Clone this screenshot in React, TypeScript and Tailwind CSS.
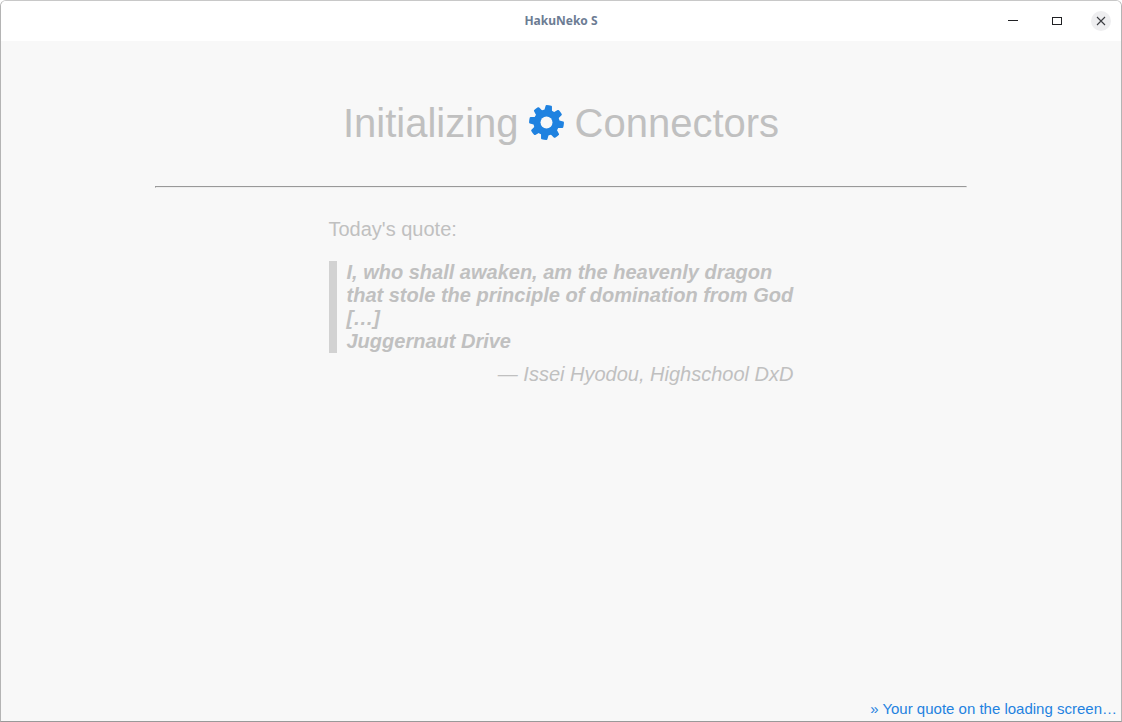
import React from "react";

const teeth = [8, 53, 98, 143, 188, 233, 278, 323];

function Gear() {
  return (
    <svg viewBox="-17.5 -17.5 36 36" className="size-9 shrink-0" aria-hidden="true">
      <defs>
        <mask id="gear-hole">
          <rect x="-18" y="-18" width="36" height="36" fill="white" />
          <circle r="6" fill="black" />
        </mask>
      </defs>
      <g fill="#1f82e0" mask="url(#gear-hole)">
        <circle r="13" />
        {teeth.map((angle) => (
          <path
            key={angle}
            transform={`rotate(${angle})`}
            d="M-3.9 -11.5 L-3.2 -16.4 Q-3.1 -17.2 -2.3 -17.3 Q0 -17.5 2.3 -17.3 Q3.1 -17.2 3.2 -16.4 L3.9 -11.5 Z"
          />
        ))}
      </g>
    </svg>
  );
}

function TitleBar() {
  return (
    <header className="grid h-10 grid-cols-[1fr_auto_1fr] items-center bg-white">
      <h1 className="col-start-2 font-['Noto_Sans',sans-serif] text-xs font-bold text-[#6c7c93]">
        HakuNeko S
      </h1>
      <div className="flex items-center justify-end gap-6 pr-2.5">
        <button type="button" aria-label="Minimize" className="flex size-5 items-center justify-center">
          <svg viewBox="0 0 20 20" className="size-5" shapeRendering="crispEdges" aria-hidden="true">
            <path d="M5 9h10v1H5z" fill="#202124" />
          </svg>
        </button>
        <button type="button" aria-label="Maximize" className="flex size-5 items-center justify-center">
          <svg viewBox="0 0 20 20" className="size-5" aria-hidden="true">
            <rect x="5.5" y="6.5" width="9" height="7" fill="none" stroke="#202124" />
          </svg>
        </button>
        <button type="button" aria-label="Close" className="flex size-5 items-center justify-center rounded-full bg-[#eeeef0]">
          <svg viewBox="0 0 20 20" className="size-5" aria-hidden="true">
            <path d="M6 6l8 8M14 6l-8 8" stroke="#3c3e42" strokeWidth="1.1" fill="none" />
          </svg>
        </button>
      </div>
    </header>
  );
}

export default function App() {
  return (
    <div className="flex min-h-screen flex-col bg-white font-['Liberation_Sans',Arial,sans-serif]">
      <div className="flex grow flex-col overflow-hidden rounded-t-md border border-t-[#c8c8c8] border-r-[#b4b4b4] border-b-[#999999] border-l-[#b4b4b4] bg-[#f8f8f8]">
        <TitleBar />
        <main className="flex grow flex-col items-center pt-[59px] text-xl leading-[23px] text-[#c0c0c0]">
          <h2 className="flex items-center gap-2.5 text-[40px] leading-[46px]">
            <span>Initializing</span>
            <Gear />
            <span>Connectors</span>
          </h2>
          <hr className="mt-10 w-[72.5%] border border-t-[#999999] border-r-[#eeeeee] border-b-[#eeeeee] border-l-[#999999]" />
          <section className="mt-[30px] w-full max-w-[465px]">
            <p>Today's quote:</p>
            <figure className="mt-5">
              <blockquote className="border-l-8 border-[#d2d2d2] pl-2.5 font-bold italic">
                I, who shall awaken, am the heavenly dragon
                <br />
                that stole the principle of domination from God
                <br />
                […]
                <br />
                Juggernaut Drive
              </blockquote>
              <figcaption className="mt-2.5 text-right italic">— Issei Hyodou, Highschool DxD</figcaption>
            </figure>
          </section>
        </main>
        <footer className="flex justify-end px-1 pb-1 text-[15px] leading-[17px]">
          <a href="#quote" className="text-[#1f82e0]">» Your quote on the loading screen…</a>
        </footer>
      </div>
    </div>
  );
}
